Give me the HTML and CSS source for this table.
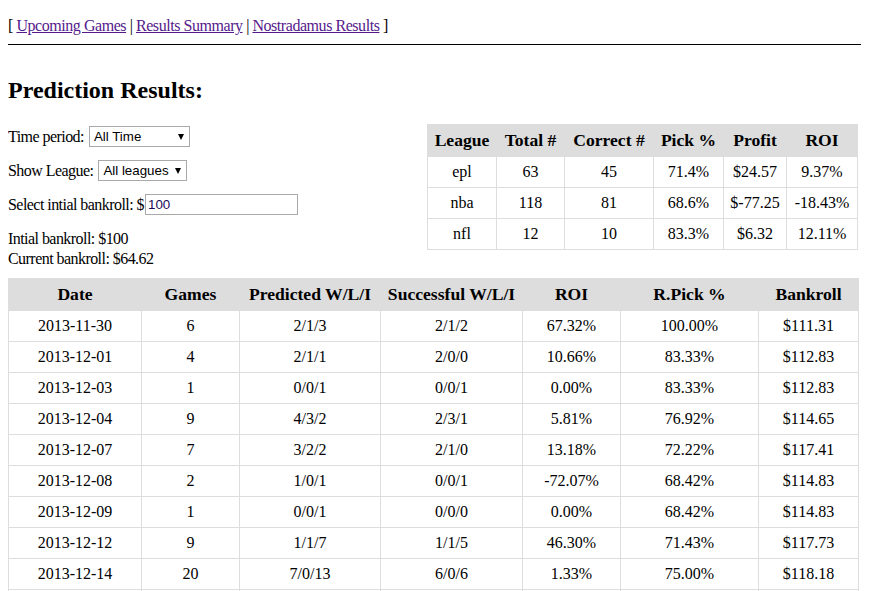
FILE: index.html
```html
<!DOCTYPE html>
<html>
<head>
<meta charset="utf-8">
<title>Prediction Results</title>
<link rel="stylesheet" href="styles.css">
</head>
<body>
<div class="topnav">[ <a href="#">Upcoming Games</a> | <a href="#">Results Summary</a> | <a href="#">Nostradamus Results</a> ]</div>
<h2 class="title">Prediction Results:</h2>
<div class="top">
  <div class="controls">
    <div class="ctl">Time period: <span class="sel sel-time">All Time</span></div>
    <div class="ctl">Show League: <span class="sel sel-league">All leagues</span></div>
    <div class="ctl">Select intial bankroll: $<span class="inp">100</span></div>
    <div class="info">Intial bankroll: $100<br>Current bankroll: $64.62</div>
  </div>
  <table class="league">
    <colgroup><col class="l1"><col class="l2"><col class="l3"><col class="l4"><col class="l5"><col class="l6"></colgroup>
    <tr><th>League</th><th>Total #</th><th>Correct #</th><th>Pick %</th><th>Profit</th><th>ROI</th></tr>
    <tr><td>epl</td><td>63</td><td>45</td><td>71.4%</td><td>$24.57</td><td>9.37%</td></tr>
    <tr><td>nba</td><td>118</td><td>81</td><td>68.6%</td><td>$-77.25</td><td>-18.43%</td></tr>
    <tr><td>nfl</td><td>12</td><td>10</td><td>83.3%</td><td>$6.32</td><td>12.11%</td></tr>
  </table>
</div>
<table class="results">
  <colgroup><col class="c1"><col class="c2"><col class="c3"><col class="c4"><col class="c5"><col class="c6"><col class="c7"></colgroup>
  <tr><th>Date</th><th>Games</th><th>Predicted W/L/I</th><th>Successful W/L/I</th><th>ROI</th><th>R.Pick %</th><th>Bankroll</th></tr>
  <tr><td>2013-11-30</td><td>6</td><td>2/1/3</td><td>2/1/2</td><td>67.32%</td><td>100.00%</td><td>$111.31</td></tr>
  <tr><td>2013-12-01</td><td>4</td><td>2/1/1</td><td>2/0/0</td><td>10.66%</td><td>83.33%</td><td>$112.83</td></tr>
  <tr><td>2013-12-03</td><td>1</td><td>0/0/1</td><td>0/0/1</td><td>0.00%</td><td>83.33%</td><td>$112.83</td></tr>
  <tr><td>2013-12-04</td><td>9</td><td>4/3/2</td><td>2/3/1</td><td>5.81%</td><td>76.92%</td><td>$114.65</td></tr>
  <tr><td>2013-12-07</td><td>7</td><td>3/2/2</td><td>2/1/0</td><td>13.18%</td><td>72.22%</td><td>$117.41</td></tr>
  <tr><td>2013-12-08</td><td>2</td><td>1/0/1</td><td>0/0/1</td><td>-72.07%</td><td>68.42%</td><td>$114.83</td></tr>
  <tr><td>2013-12-09</td><td>1</td><td>0/0/1</td><td>0/0/0</td><td>0.00%</td><td>68.42%</td><td>$114.83</td></tr>
  <tr><td>2013-12-12</td><td>9</td><td>1/1/7</td><td>1/1/5</td><td>46.30%</td><td>71.43%</td><td>$117.73</td></tr>
  <tr><td>2013-12-14</td><td>20</td><td>7/0/13</td><td>6/0/6</td><td>1.33%</td><td>75.00%</td><td>$118.18</td></tr>
  <tr><td></td><td></td><td></td><td></td><td></td><td></td><td></td></tr>
</table>
</body>
</html>
```
FILE: styles.css
```css
html {
  margin: 0;
  padding: 0;
  overflow: hidden;
}
body {
  margin: 8px;
  font-family: "Liberation Serif", "Times New Roman", serif;
  font-size: 16px;
  color: #000;
}
.topnav {
  padding: 9px 0 9px;
  margin-right: -16px;
  border-bottom: 1px solid #000;
  line-height: 18px;
  letter-spacing: -0.45px;
}
.topnav a {
  color: #551a8b;
}
.title {
  font-size: 24px;
  font-weight: bold;
  margin: 31px 0 20px;
  line-height: 28px;
}
.top {
  display: flex;
  justify-content: space-between;
  align-items: flex-start;
  width: 850px;
}
.controls {
  display: flex;
  flex-direction: column;
  gap: 13px;
  padding-top: 2px;
  letter-spacing: -0.55px;
}
.ctl {
  display: flex;
  align-items: center;
  height: 21px;
}
.sel {
  position: relative;
  display: inline-block;
  box-sizing: border-box;
  height: 21px;
  margin-left: 5px;
  border: 1px solid #a9a9a9;
  font-family: "Liberation Sans", Arial, sans-serif;
  font-size: 13.33px;
  letter-spacing: 0;
  line-height: 19px;
  padding: 0 0 0 4px;
}
.sel::after {
  content: "";
  position: absolute;
  right: 5px;
  top: 7px;
  border-left: 3.5px solid transparent;
  border-right: 3.5px solid transparent;
  border-top: 6px solid #000;
}
.sel-time { width: 101px; }
.sel-league { width: 89px; }
.inp {
  display: inline-block;
  box-sizing: border-box;
  width: 153px;
  height: 21px;
  margin-left: 1px;
  border: 1px solid #a9a9a9;
  font-family: "Liberation Sans", Arial, sans-serif;
  font-size: 13.33px;
  letter-spacing: 0;
  line-height: 19px;
  padding: 0 2px;
  color: #1a0a5a;
}
.info {
  line-height: 20px;
  margin-top: 1px;
}
table {
  border-collapse: collapse;
  table-layout: fixed;
}
th, td {
  border: 1px solid #dddddd;
  text-align: center;
  padding: 0;
  height: 30px;
}
th {
  background: #dddddd;
  font-size: 17.6px;
  font-weight: bold;
  height: 31px;
}
.league {
  width: 430px;
}
.l1 { width: 69px; }
.l2 { width: 68px; }
.l3 { width: 89px; }
.l4 { width: 70px; }
.l5 { width: 63px; }
.l6 { width: 71px; }
.results {
  width: 850px;
  margin-top: 9px;
}
.c1 { width: 133px; }
.c2 { width: 98px; }
.c3 { width: 141px; }
.c4 { width: 142px; }
.c5 { width: 98px; }
.c6 { width: 138px; }
.c7 { width: 100px; }
```
